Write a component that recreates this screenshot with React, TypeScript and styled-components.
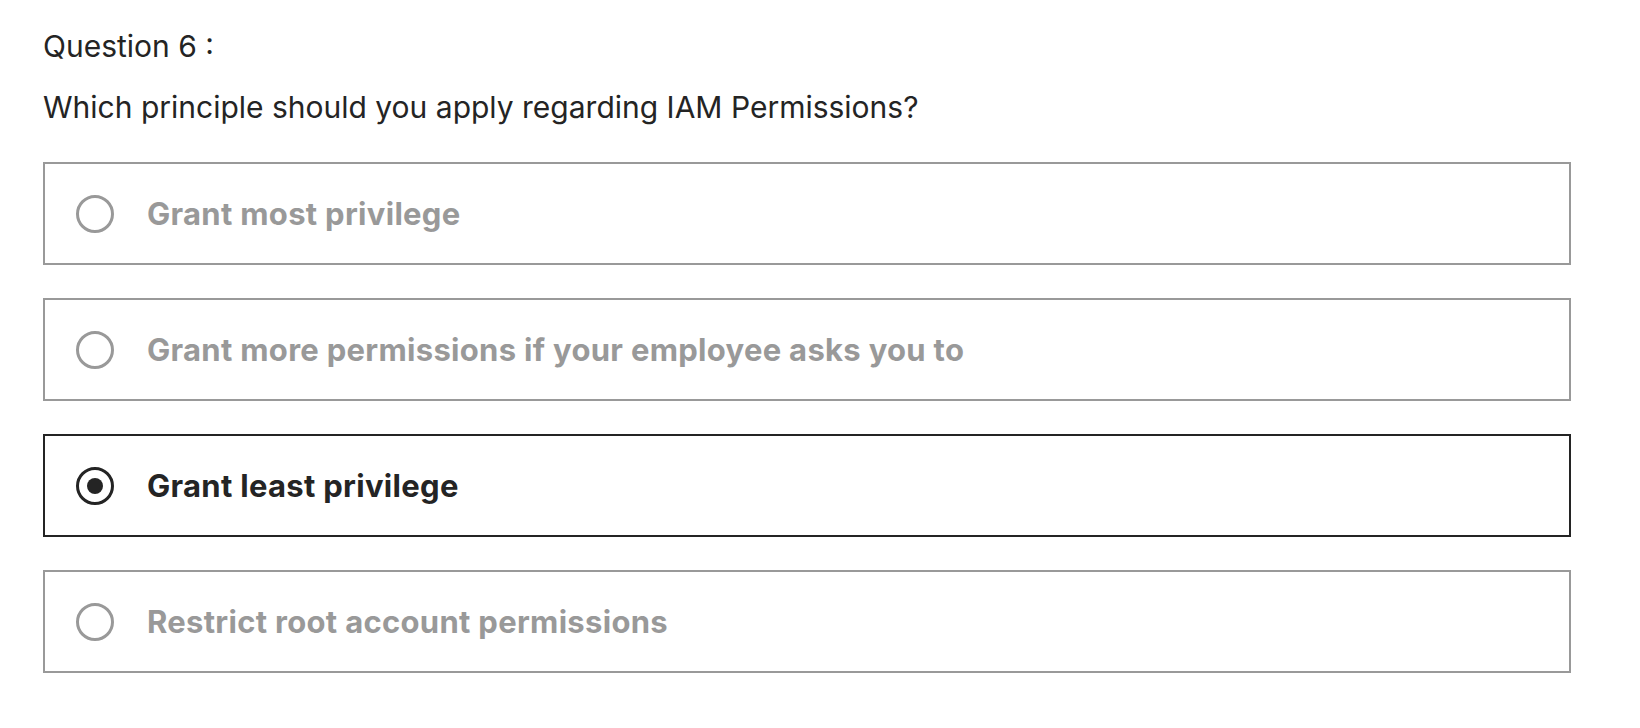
import React, { useState } from "react";
import styled, { createGlobalStyle } from "styled-components";

const Global = createGlobalStyle`
  html, body { margin: 0; padding: 0; background: #fff; }
  body { font-family: Inter, "Noto Sans", sans-serif; color: #242424; }
`;

const Page = styled.div`
  padding: 26px 69px 0 43px;
`;

const Label = styled.div`
  font-size: 30px;
  line-height: 40px;
  font-weight: 400;
  color: #242424;
`;

const Prompt = styled.div`
  font-size: 30px;
  line-height: 40px;
  margin-top: 21px;
  color: #242424;
`;

const Options = styled.div`
  display: flex;
  flex-direction: column;
  gap: 33px;
  margin-top: 35px;
`;

const Option = styled.label<{ $selected: boolean }>`
  display: flex;
  align-items: center;
  gap: 33px;
  height: 103px;
  box-sizing: border-box;
  padding: 0 0 0 31px;
  border: 2px solid ${(p) => (p.$selected ? "#242424" : "#999999")};
  cursor: pointer;
`;

const Radio = styled.span<{ $selected: boolean }>`
  width: 38px;
  height: 38px;
  box-sizing: border-box;
  border-radius: 50%;
  border: 3px solid ${(p) => (p.$selected ? "#242424" : "#999999")};
  display: flex;
  align-items: center;
  justify-content: center;
  flex-shrink: 0;
`;

const Dot = styled.span`
  width: 16px;
  height: 16px;
  border-radius: 50%;
  background: #242424;
`;

const OptionText = styled.span<{ $selected: boolean }>`
  font-size: 31px;
  font-weight: 700;
  letter-spacing: 0.3px;
  color: ${(p) => (p.$selected ? "#242424" : "#999999")};
`;

const choices = [
  "Grant most privilege",
  "Grant more permissions if your employee asks you to",
  "Grant least privilege",
  "Restrict root account permissions",
];

export default function App() {
  const [sel, setSel] = useState(2);
  return (
    <>
      <Global />
      <Page>
        <Label>Question 6 :</Label>
        <Prompt>Which principle should you apply regarding IAM Permissions?</Prompt>
        <Options>
          {choices.map((c, i) => (
            <Option key={c} $selected={sel === i} onClick={() => setSel(i)}>
              <Radio $selected={sel === i}>{sel === i && <Dot />}</Radio>
              <OptionText $selected={sel === i}>{c}</OptionText>
            </Option>
          ))}
        </Options>
      </Page>
    </>
  );
}
